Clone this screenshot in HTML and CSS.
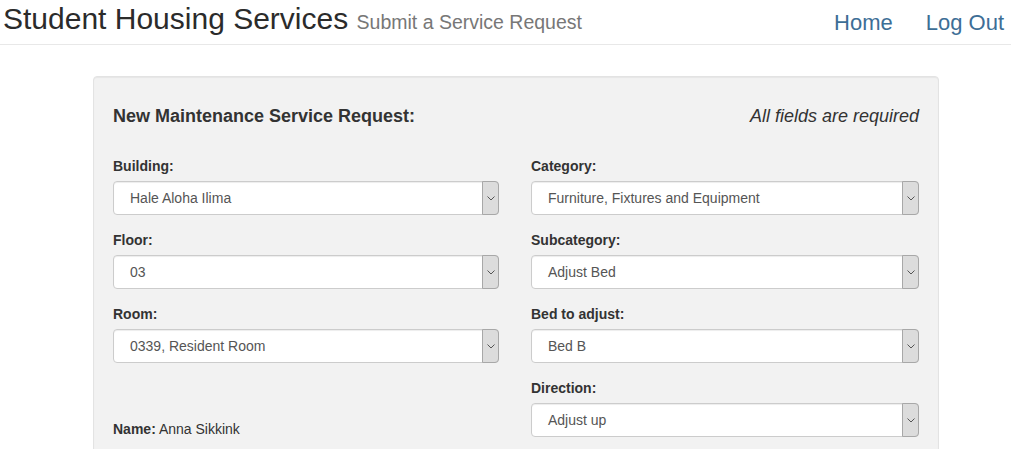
FILE: index.html
```html
<!DOCTYPE html>
<html lang="en">
<head>
<meta charset="utf-8">
<title>Student Housing Services</title>
<link rel="stylesheet" href="styles.css">
</head>
<body>
<header class="topbar">
  <h1 class="brand">Student Housing Services <small>Submit a Service Request</small></h1>
  <nav class="nav">
    <a href="#">Home</a>
    <a href="#">Log Out</a>
  </nav>
</header>

<main class="well">
  <div class="well-head">
    <h2 class="well-title">New Maintenance Service Request:</h2>
    <p class="req">All fields are required</p>
  </div>
  <div class="cols">
    <div class="col">
      <div class="group">
        <label class="lbl">Building:</label>
        <div class="sel"><span class="sel-text">Hale Aloha Ilima</span><span class="sel-arrow"><svg width="8" height="5" viewBox="0 0 8 5"><path d="M0.5 0.5 L4 4 L7.5 0.5" fill="none" stroke="#555" stroke-width="1"/></svg></span></div>
      </div>
      <div class="group">
        <label class="lbl">Floor:</label>
        <div class="sel"><span class="sel-text">03</span><span class="sel-arrow"><svg width="8" height="5" viewBox="0 0 8 5"><path d="M0.5 0.5 L4 4 L7.5 0.5" fill="none" stroke="#555" stroke-width="1"/></svg></span></div>
      </div>
      <div class="group">
        <label class="lbl">Room:</label>
        <div class="sel"><span class="sel-text">0339, Resident Room</span><span class="sel-arrow"><svg width="8" height="5" viewBox="0 0 8 5"><path d="M0.5 0.5 L4 4 L7.5 0.5" fill="none" stroke="#555" stroke-width="1"/></svg></span></div>
      </div>
      <p class="name"><b>Name:</b> Anna Sikkink</p>
    </div>
    <div class="col">
      <div class="group">
        <label class="lbl">Category:</label>
        <div class="sel"><span class="sel-text">Furniture, Fixtures and Equipment</span><span class="sel-arrow"><svg width="8" height="5" viewBox="0 0 8 5"><path d="M0.5 0.5 L4 4 L7.5 0.5" fill="none" stroke="#555" stroke-width="1"/></svg></span></div>
      </div>
      <div class="group">
        <label class="lbl">Subcategory:</label>
        <div class="sel"><span class="sel-text">Adjust Bed</span><span class="sel-arrow"><svg width="8" height="5" viewBox="0 0 8 5"><path d="M0.5 0.5 L4 4 L7.5 0.5" fill="none" stroke="#555" stroke-width="1"/></svg></span></div>
      </div>
      <div class="group">
        <label class="lbl">Bed to adjust:</label>
        <div class="sel"><span class="sel-text">Bed B</span><span class="sel-arrow"><svg width="8" height="5" viewBox="0 0 8 5"><path d="M0.5 0.5 L4 4 L7.5 0.5" fill="none" stroke="#555" stroke-width="1"/></svg></span></div>
      </div>
      <div class="group">
        <label class="lbl">Direction:</label>
        <div class="sel"><span class="sel-text">Adjust up</span><span class="sel-arrow"><svg width="8" height="5" viewBox="0 0 8 5"><path d="M0.5 0.5 L4 4 L7.5 0.5" fill="none" stroke="#555" stroke-width="1"/></svg></span></div>
      </div>
    </div>
  </div>
</main>
</body>
</html>
```

FILE: styles.css
```css
* { box-sizing: border-box; }
html, body { margin: 0; padding: 0; background: #fff; }
body {
  font-family: "Liberation Sans", Arial, sans-serif;
  font-size: 14px;
  color: #333;
  overflow: hidden;
}

.topbar {
  display: flex;
  justify-content: space-between;
  align-items: flex-start;
  height: 45px;
  border-bottom: 1px solid #e8e8e8;
  padding: 0 7px 0 3px;
}
.brand {
  margin: 0;
  padding-top: 2px;
  font-size: 30px;
  line-height: 33px;
  font-weight: normal;
  color: #2b2b2b;
  white-space: nowrap;
}
.brand small {
  font-size: 19.5px;
  color: #777;
}
.nav {
  display: flex;
  gap: 33px;
  padding-top: 12px;
}
.nav a {
  font-size: 22px;
  line-height: 22px;
  color: #3d6e96;
  text-decoration: none;
}

.well {
  margin: 31px 72px 0 93px;
  background: #f2f2f2;
  border: 1px solid #e3e3e3;
  border-radius: 4px;
  box-shadow: inset 0 1px 1px rgba(0,0,0,.05);
  padding: 19px 19px 40px;
}
.well-head {
  display: flex;
  justify-content: space-between;
  align-items: center;
  margin: 10px 0 30px;
  height: 20px;
}
.well-title {
  margin: 0;
  font-size: 18px;
  line-height: 20px;
  font-weight: bold;
  color: #333;
}
.req {
  margin: 0;
  font-size: 18px;
  line-height: 20px;
  font-style: italic;
  color: #333;
}

.cols {
  display: grid;
  grid-template-columns: 386px 1fr;
  column-gap: 32px;
}
.col { display: flex; flex-direction: column; }
.group { margin-bottom: 15px; }
.lbl {
  display: block;
  font-weight: bold;
  font-size: 14px;
  line-height: 20px;
  margin-bottom: 5px;
  color: #333;
}
.sel {
  display: flex;
  height: 34px;
  background: #fff;
  border: 1px solid #ccc;
  border-radius: 4px;
  box-shadow: inset 0 1px 1px rgba(0,0,0,.075);
}
.sel-text {
  flex: 1;
  padding-left: 16px;
  line-height: 32px;
  font-size: 14px;
  color: #555;
  white-space: nowrap;
  overflow: hidden;
}
.sel-arrow {
  width: 17px;
  margin: -1px -1px -1px 0;
  background: #dcdcdc;
  border: 1px solid #a8a8a8;
  border-radius: 0 4px 4px 0;
  display: flex;
  align-items: center;
  justify-content: center;
}
.name {
  margin: 41px 0 0;
  font-size: 14px;
  line-height: 20px;
  color: #333;
}
```
